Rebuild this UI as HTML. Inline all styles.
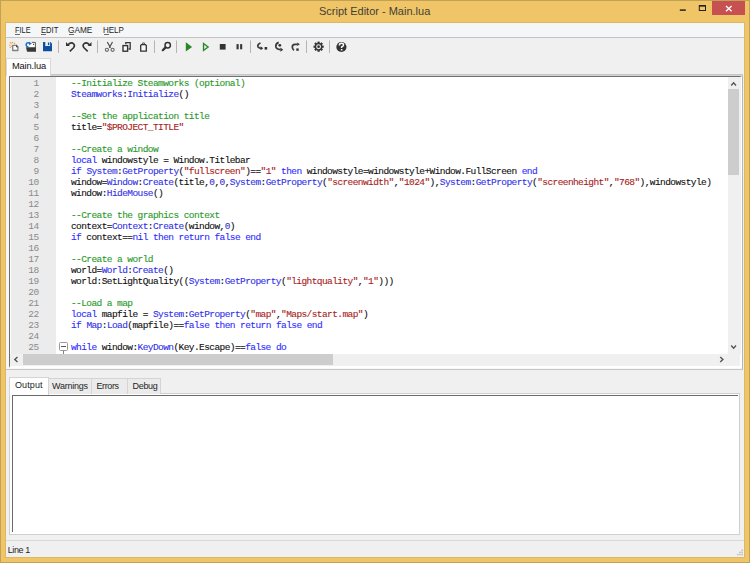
<!DOCTYPE html>
<html><head><meta charset="utf-8">
<style>
*{margin:0;padding:0;box-sizing:border-box}
html,body{width:750px;height:563px;overflow:hidden;background:#efc568}
body{position:relative;font-family:"Liberation Sans",sans-serif}
.a{position:absolute}
#frame{left:0;top:0;width:750px;height:563px;border:1px solid #c4a255}
#title{left:319px;top:4px;width:200px;font-size:11px;line-height:15px;color:#433f35;letter-spacing:0px}
#client{left:6px;top:23px;width:738px;height:534px;background:#f0f0f0}
#menubar{left:6px;top:23px;width:738px;height:15px;background:#f5f6f7;border-bottom:1px solid #c4c4c4}
.menu{position:absolute;top:24.5px;font-size:9.2px;line-height:10px;color:#1e1e1e;transform-origin:0 0}
.menu u{text-decoration:none}
.ul{position:absolute;top:34px;height:1px;background:#6a6a6a}
#tab1{left:6px;top:58px;width:45px;height:18px;background:#fff;border:1px solid #d9d9d9;border-bottom:none}
#tab1 span{position:absolute;left:5px;top:2px;font-size:9.3px;line-height:11px;color:#111;letter-spacing:-0.15px}
#tabline{left:50px;top:74px;width:693px;height:1px;background:#c6c6c6}
#ed{left:6px;top:75px;width:737px;height:295px;border-top:1px solid #d4d4d4;border-right:1px solid #b4b4b4;border-bottom:1px solid #c6c6c6;background:#f8f8f8}
#edin{left:9px;top:76px;width:733px;height:292px;border-top:1px solid #707070;border-left:1px solid #707070;border-right:2px solid #fff;border-bottom:2px solid #fff;background:#fff;overflow:hidden}
#gutter{left:10.5px;top:77px;width:45px;height:277px;background:#ececec}
#code{left:0;top:77.5px;width:728px;height:276px;overflow:hidden}
.ln{position:absolute;left:0;height:11px;width:728px;font-family:"Liberation Mono",monospace;font-size:9.5px;line-height:11px;white-space:pre;color:#111}
.ln b{position:absolute;left:14px;width:25px;text-align:right;font-weight:normal;color:#8a8a8a;letter-spacing:-0.3px}
.ln span{position:absolute;left:71px;letter-spacing:-0.58px;-webkit-text-stroke:0.12px currentColor}
.ln i{font-style:normal}
i.c{color:#2a9a2a}
i.k{color:#2e2eff}
i.f{color:#3232e8}
i.s{color:#a82424}
i.d{color:#3636c8}
#vsb{left:728px;top:77px;width:12.5px;height:277px;background:#f0f0f0}
#vthumb{left:728px;top:89px;width:11px;height:86px;background:#cdcdcd}
#hsb{left:10px;top:354px;width:730px;height:11.6px;background:#f0f0f0}
#hthumb{left:23px;top:354.3px;width:310px;height:11px;background:#cdcdcd}
.otab{position:absolute;top:378px;height:16px;background:#ebebeb;border:1px solid #d4d4d4;border-bottom:none;font-size:9px;line-height:12px;color:#1e1e1e}
.otab span{position:absolute;top:0.8px}
#obox{left:9px;top:393px;width:731px;height:142px;background:#fff;border:1px solid #d0d0d0}
#oin{left:12px;top:395px;width:726px;height:137px;border-top:1px solid #6a6a6a;border-left:1px solid #6a6a6a}
#status{left:6px;top:540px;width:738px;height:17px;border-top:1px solid #d9d9d9;background:#f0f0f0}
#status span{position:absolute;left:1.7px;top:4px;font-size:9px;line-height:10px;color:#1e1e1e;letter-spacing:-0.4px}
</style></head><body>
<div class="a" id="frame"></div>
<div class="a" id="title">Script Editor - Main.lua</div>
<svg class="a" style="left:0;top:0" width="750" height="23">
 <rect x="679.8" y="9.4" width="6" height="1.4" fill="#1a1a1a"/>
 <rect x="699.3" y="5.6" width="6.2" height="4.9" fill="none" stroke="#222" stroke-width="1"/>
 <rect x="699" y="5.1" width="6.8" height="1.5" fill="#222"/>
 <rect x="712" y="1" width="33" height="14" fill="#c75050"/>
 <path d="M726 6 L731.6 11.2 M731.6 6 L726 11.2" stroke="#fff" stroke-width="1.35"/>
</svg>
<div class="a" style="left:5px;top:22px;width:740px;height:536px;border:1px solid #dcb862"></div>
<div class="a" id="client"></div>
<div class="a" id="menubar"></div>
<div class="menu" style="left:15.2px;transform:scaleX(0.8)"><u>F</u>ILE</div>
<div class="menu" style="left:41px;transform:scaleX(0.83)"><u>E</u>DIT</div>
<div class="menu" style="left:68.3px;transform:scaleX(0.9)"><u>G</u>AME</div>
<div class="menu" style="left:103.3px;transform:scaleX(0.87)"><u>H</u>ELP</div>
<div class="ul" style="left:15.3px;width:4.6px"></div><div class="ul" style="left:41.2px;width:4.6px"></div><div class="ul" style="left:68.8px;width:5.4px"></div><div class="ul" style="left:103.8px;width:5.4px"></div>
<svg class="a" style="left:0;top:36px" width="360" height="22" viewBox="0 36 360 22">
 <g fill="#b4b4b4">
  <rect x="58" y="40.5" width="1" height="12.5"/>
  <rect x="97" y="40.5" width="1" height="12.5"/>
  <rect x="154" y="40.5" width="1" height="12.5"/>
  <rect x="176" y="40.5" width="1" height="12.5"/>
  <rect x="250" y="40.5" width="1" height="12.5"/>
  <rect x="306" y="40.5" width="1" height="12.5"/>
  <rect x="329" y="40.5" width="1" height="12.5"/>
 </g>
 <!-- new -->
 <g fill="#e9a545">
  <circle cx="12.5" cy="42.4" r="0.75"/><circle cx="14.5" cy="43.3" r="0.8"/><circle cx="11" cy="43.3" r="0.75"/>
  <circle cx="10.2" cy="42.5" r="0.6"/><circle cx="9.8" cy="45.2" r="0.7"/><circle cx="11.3" cy="46.3" r="0.7"/><circle cx="10.3" cy="47.4" r="0.7"/>
 </g>
 <path d="M12.7 45.3 H16.3 L17.9 46.9 V50.5 H12.7 Z" fill="#fafafa" stroke="#808080" stroke-width="1.3" stroke-linejoin="round"/>
 <path d="M16 44.6 L18.6 47.2 H16 Z" fill="#505050"/>
 <!-- open -->
 <rect x="28.5" y="42.8" width="6.6" height="5" fill="#fcfcfc"/>
 <path d="M31.8 42.4 H35.4 V51.5" fill="none" stroke="#5a5a5a" stroke-width="1"/>
 <rect x="33" y="43.8" width="1.1" height="1.1" fill="#333"/>
 <path d="M25.9 47.2 H35.9 V51.7 H27.1 Z" fill="#383838"/>
 <path d="M29.25 43 A2.1 2.1 0 1 0 28.6 46.9" fill="none" stroke="#1f6cc0" stroke-width="1.5"/>
 <path d="M29 41.7 L31.9 43.6 L29 45.3 Z" fill="#1f6cc0"/>
 <!-- save -->
 <path d="M43 42 H50.6 L52 43.4 V51.2 H43 Z" fill="#0b51a0"/>
 <rect x="45.3" y="41.8" width="4.8" height="4.2" fill="#f0f0f0"/>
 <rect x="47.9" y="42.5" width="1.4" height="2.6" fill="#0b51a0"/>
 <!-- undo -->
 <g fill="none" stroke="#333" stroke-width="1.6">
  <path d="M68 44.8 Q71 41.5 73.8 44 Q75.2 45.8 73.5 47.8 L69.8 51.3"/>
  <path d="M89.5 44.8 Q86.5 41.5 83.7 44 Q82.3 45.8 84 47.8 L87.7 51.3"/>
 </g>
 <path d="M66 42 V45.9 H69.8 Z" fill="#333"/>
 <path d="M91.5 42 V45.9 H87.7 Z" fill="#333"/>
 <!-- cut -->
 <g fill="none" stroke="#444" stroke-width="1.1">
  <path d="M107.3 42 L110.5 47.8 M112.5 42 L109.3 47.8"/>
  <circle cx="106.9" cy="49.8" r="1.6" stroke="#666"/>
  <circle cx="112.6" cy="49.8" r="1.6" stroke="#666"/>
 </g>
 <!-- copy -->
 <path d="M125.8 44.3 V42.6 H130.2 V49 H128.5" fill="none" stroke="#383838" stroke-width="1.3"/>
 <rect x="123" y="45.6" width="4.6" height="5.6" fill="#f8f8f8" stroke="#333" stroke-width="1.4"/>
 <!-- paste -->
 <path d="M141.5 44.7 H145.5 L146.3 45.5 V51.2 H140.7 V45.5 Z" fill="#f8f8f8" stroke="#333" stroke-width="1.3"/>
 <path d="M142 44.6 L142.6 42.4 H144.4 L145 44.6 Z" fill="#333"/>
 <circle cx="143.5" cy="43.3" r="0.5" fill="#ddd"/>
 <!-- find -->
 <circle cx="167.7" cy="45.2" r="2.7" fill="#f4f4f4" stroke="#333" stroke-width="1.5"/>
 <path d="M165.6 47.4 L162.8 50.2" stroke="#333" stroke-width="2.2" stroke-linecap="round"/>
 <!-- play -->
 <path d="M185.8 42.3 L192.1 46.9 L185.8 51.5 Z" fill="#258a25"/>
 <path d="M203.5 43.4 L208.2 46.9 L203.5 50.4 Z" fill="#dfe8df" stroke="#258a25" stroke-width="1.3" stroke-linejoin="miter"/>
 <!-- stop pause -->
 <rect x="219.8" y="44" width="5.8" height="5.6" fill="#333"/>
 <rect x="236.5" y="44.1" width="2.2" height="5.2" fill="#383838"/>
 <rect x="240.1" y="44.1" width="2.1" height="5.2" fill="#383838"/>
 <!-- step over -->
 <g fill="none" stroke="#3a3a3a" stroke-width="1.7">
  <path d="M260.5 43 Q257.6 44 257.8 46.2 Q258.2 48.3 261 48.3"/>
  <path d="M278.7 42.4 Q275.7 43.5 275.8 46.3 Q276 49.4 280.5 49.7"/>
  <path d="M297.2 44.3 H295 Q292.2 44.5 292.3 47 Q292.4 49.3 294 50.3"/>
 </g>
 <path d="M260.6 46.2 L263.2 48.3 L260.6 50.3 Z" fill="#333"/>
 <rect x="264.6" y="47" width="2.6" height="2.6" fill="#333"/>
 <path d="M280.4 47.6 L283.2 49.7 L280.4 51.8 Z" fill="#333"/>
 <circle cx="279.8" cy="45.3" r="1.4" fill="#333"/>
 <path d="M297.2 42.5 L299.8 44.3 L297.2 46.1 Z" fill="#333"/>
 <rect x="296.3" y="48.4" width="2.4" height="2.4" fill="#333"/>
 <!-- gear -->
 <g transform="translate(318.6 46.7)">
  <g fill="#333">
   <circle r="3.8"/>
   <rect x="-1.1" y="-5.1" width="2.2" height="10.2"/>
   <rect x="-1.1" y="-5.1" width="2.2" height="10.2" transform="rotate(45)"/>
   <rect x="-1.1" y="-5.1" width="2.2" height="10.2" transform="rotate(90)"/>
   <rect x="-1.1" y="-5.1" width="2.2" height="10.2" transform="rotate(135)"/>
  </g>
  <circle r="1.9" fill="none" stroke="#eee" stroke-width="1.1"/>
 </g>
 <!-- help -->
 <circle cx="341.4" cy="47" r="5.1" fill="#333"/>
 <path d="M339.4 45.4 Q339.4 43.3 341.5 43.3 Q343.5 43.3 343.5 45 Q343.5 46.2 341.6 46.9 V48" fill="none" stroke="#fff" stroke-width="1.5"/>
 <rect x="340.8" y="49" width="1.6" height="1.5" fill="#fff"/>
</svg>

<div class="a" id="tabline"></div>
<div class="a" id="ed"></div>
<div class="a" id="tab1"><span>Main.lua</span></div>
<div class="a" id="edin"></div>
<div class="a" id="gutter"></div>
<div class="a" id="code">
<div class="ln" style="top:0px"><b>1</b><span><i class="c">--Initialize Steamworks (optional)</i></span></div>
<div class="ln" style="top:11px"><b>2</b><span><i class="f">Steamworks</i>:<i class="f">Initialize</i>()</span></div>
<div class="ln" style="top:22px"><b>3</b><span></span></div>
<div class="ln" style="top:33px"><b>4</b><span><i class="c">--Set the application title</i></span></div>
<div class="ln" style="top:44px"><b>5</b><span>title=<i class="s">&quot;$PROJECT_TITLE&quot;</i></span></div>
<div class="ln" style="top:55px"><b>6</b><span></span></div>
<div class="ln" style="top:66px"><b>7</b><span><i class="c">--Create a window</i></span></div>
<div class="ln" style="top:77px"><b>8</b><span><i class="k">local</i> windowstyle = Window.Titlebar</span></div>
<div class="ln" style="top:88px"><b>9</b><span><i class="k">if</i> <i class="f">System</i>:<i class="f">GetProperty</i>(<i class="s">&quot;fullscreen&quot;</i>)==<i class="s">&quot;1&quot;</i> <i class="k">then</i> windowstyle=windowstyle+Window.FullScreen <i class="k">end</i></span></div>
<div class="ln" style="top:99px"><b>10</b><span>window=<i class="f">Window</i>:<i class="f">Create</i>(title,<i class="d">0</i>,<i class="d">0</i>,<i class="f">System</i>:<i class="f">GetProperty</i>(<i class="s">&quot;screenwidth&quot;</i>,<i class="s">&quot;1024&quot;</i>),<i class="f">System</i>:<i class="f">GetProperty</i>(<i class="s">&quot;screenheight&quot;</i>,<i class="s">&quot;768&quot;</i>),windowstyle)</span></div>
<div class="ln" style="top:110px"><b>11</b><span>window:<i class="f">HideMouse</i>()</span></div>
<div class="ln" style="top:121px"><b>12</b><span></span></div>
<div class="ln" style="top:132px"><b>13</b><span><i class="c">--Create the graphics context</i></span></div>
<div class="ln" style="top:143px"><b>14</b><span>context=<i class="f">Context</i>:<i class="f">Create</i>(window,<i class="d">0</i>)</span></div>
<div class="ln" style="top:154px"><b>15</b><span><i class="k">if</i> context==<i class="k">nil</i> <i class="k">then</i> <i class="k">return</i> <i class="k">false</i> <i class="k">end</i></span></div>
<div class="ln" style="top:165px"><b>16</b><span></span></div>
<div class="ln" style="top:176px"><b>17</b><span><i class="c">--Create a world</i></span></div>
<div class="ln" style="top:187px"><b>18</b><span>world=<i class="f">World</i>:<i class="f">Create</i>()</span></div>
<div class="ln" style="top:198px"><b>19</b><span>world:SetLightQuality((<i class="f">System</i>:<i class="f">GetProperty</i>(<i class="s">&quot;lightquality&quot;</i>,<i class="s">&quot;1&quot;</i>)))</span></div>
<div class="ln" style="top:209px"><b>20</b><span></span></div>
<div class="ln" style="top:220px"><b>21</b><span><i class="c">--Load a map</i></span></div>
<div class="ln" style="top:231px"><b>22</b><span><i class="k">local</i> mapfile = <i class="f">System</i>:<i class="f">GetProperty</i>(<i class="s">&quot;map&quot;</i>,<i class="s">&quot;Maps/start.map&quot;</i>)</span></div>
<div class="ln" style="top:242px"><b>23</b><span><i class="k">if</i> <i class="f">Map</i>:<i class="f">Load</i>(mapfile)==<i class="k">false</i> <i class="k">then</i> <i class="k">return</i> <i class="k">false</i> <i class="k">end</i></span></div>
<div class="ln" style="top:253px"><b>24</b><span></span></div>
<div class="ln" style="top:264px"><b>25</b><span><i class="k">while</i> window:<i class="f">KeyDown</i>(Key.Escape)==<i class="k">false</i> <i class="k">do</i></span></div></div>
<svg class="a" style="left:0;top:0" width="750" height="370">
 <rect x="59.5" y="342.5" width="8" height="8" rx="1" fill="#fff" stroke="#9a9a9a" stroke-width="1"/>
 <path d="M61 346.5 H66" stroke="#555" stroke-width="1"/>
 <path d="M63.5 351 V354" stroke="#808080" stroke-width="1"/>
</svg>
<div class="a" id="vsb"></div>
<div class="a" id="vthumb"></div>
<div class="a" id="hsb"></div>
<div class="a" id="hthumb"></div>
<svg class="a" style="left:0;top:0" width="750" height="370">
 <path d="M731.2 85.5 L733.6 82.8 L736 85.5" fill="none" stroke="#555" stroke-width="1.4"/>
 <path d="M731.2 345.5 L733.6 348.2 L736 345.5" fill="none" stroke="#555" stroke-width="1.4"/>
 <path d="M17.5 357 L14.8 359.5 L17.5 362" fill="none" stroke="#555" stroke-width="1.4"/>
 <path d="M720.2 357 L722.9 359.5 L720.2 362" fill="none" stroke="#555" stroke-width="1.4"/>
</svg>
<div class="a" id="obox"></div>
<div class="a" id="oin"></div>
<div class="otab" style="left:48px;width:44px"><span style="left:3px;letter-spacing:-0.25px">Warnings</span></div>
<div class="otab" style="left:91px;width:37px"><span style="left:4.5px;letter-spacing:-0.4px">Errors</span></div>
<div class="otab" style="left:127px;width:34px"><span style="left:4.5px;letter-spacing:-0.3px">Debug</span></div>
<div class="otab" style="left:9px;top:377px;width:40px;height:18px;background:#fff"><span style="left:5px;top:1px;letter-spacing:0.1px">Output</span></div>
<div class="a" id="status"><span>Line 1</span></div>
<svg class="a" style="left:730px;top:545px" width="14" height="12">
 <g fill="#bcbcbc">
 <rect x="11.4" y="4.4" width="1.5" height="1.5"/>
 <rect x="9.2" y="6.6" width="1.5" height="1.5"/><rect x="11.4" y="6.6" width="1.5" height="1.5"/>
 <rect x="7" y="8.8" width="1.5" height="1.5"/><rect x="9.2" y="8.8" width="1.5" height="1.5"/><rect x="11.4" y="8.8" width="1.5" height="1.5"/>
 </g>
</svg>
</body></html>
